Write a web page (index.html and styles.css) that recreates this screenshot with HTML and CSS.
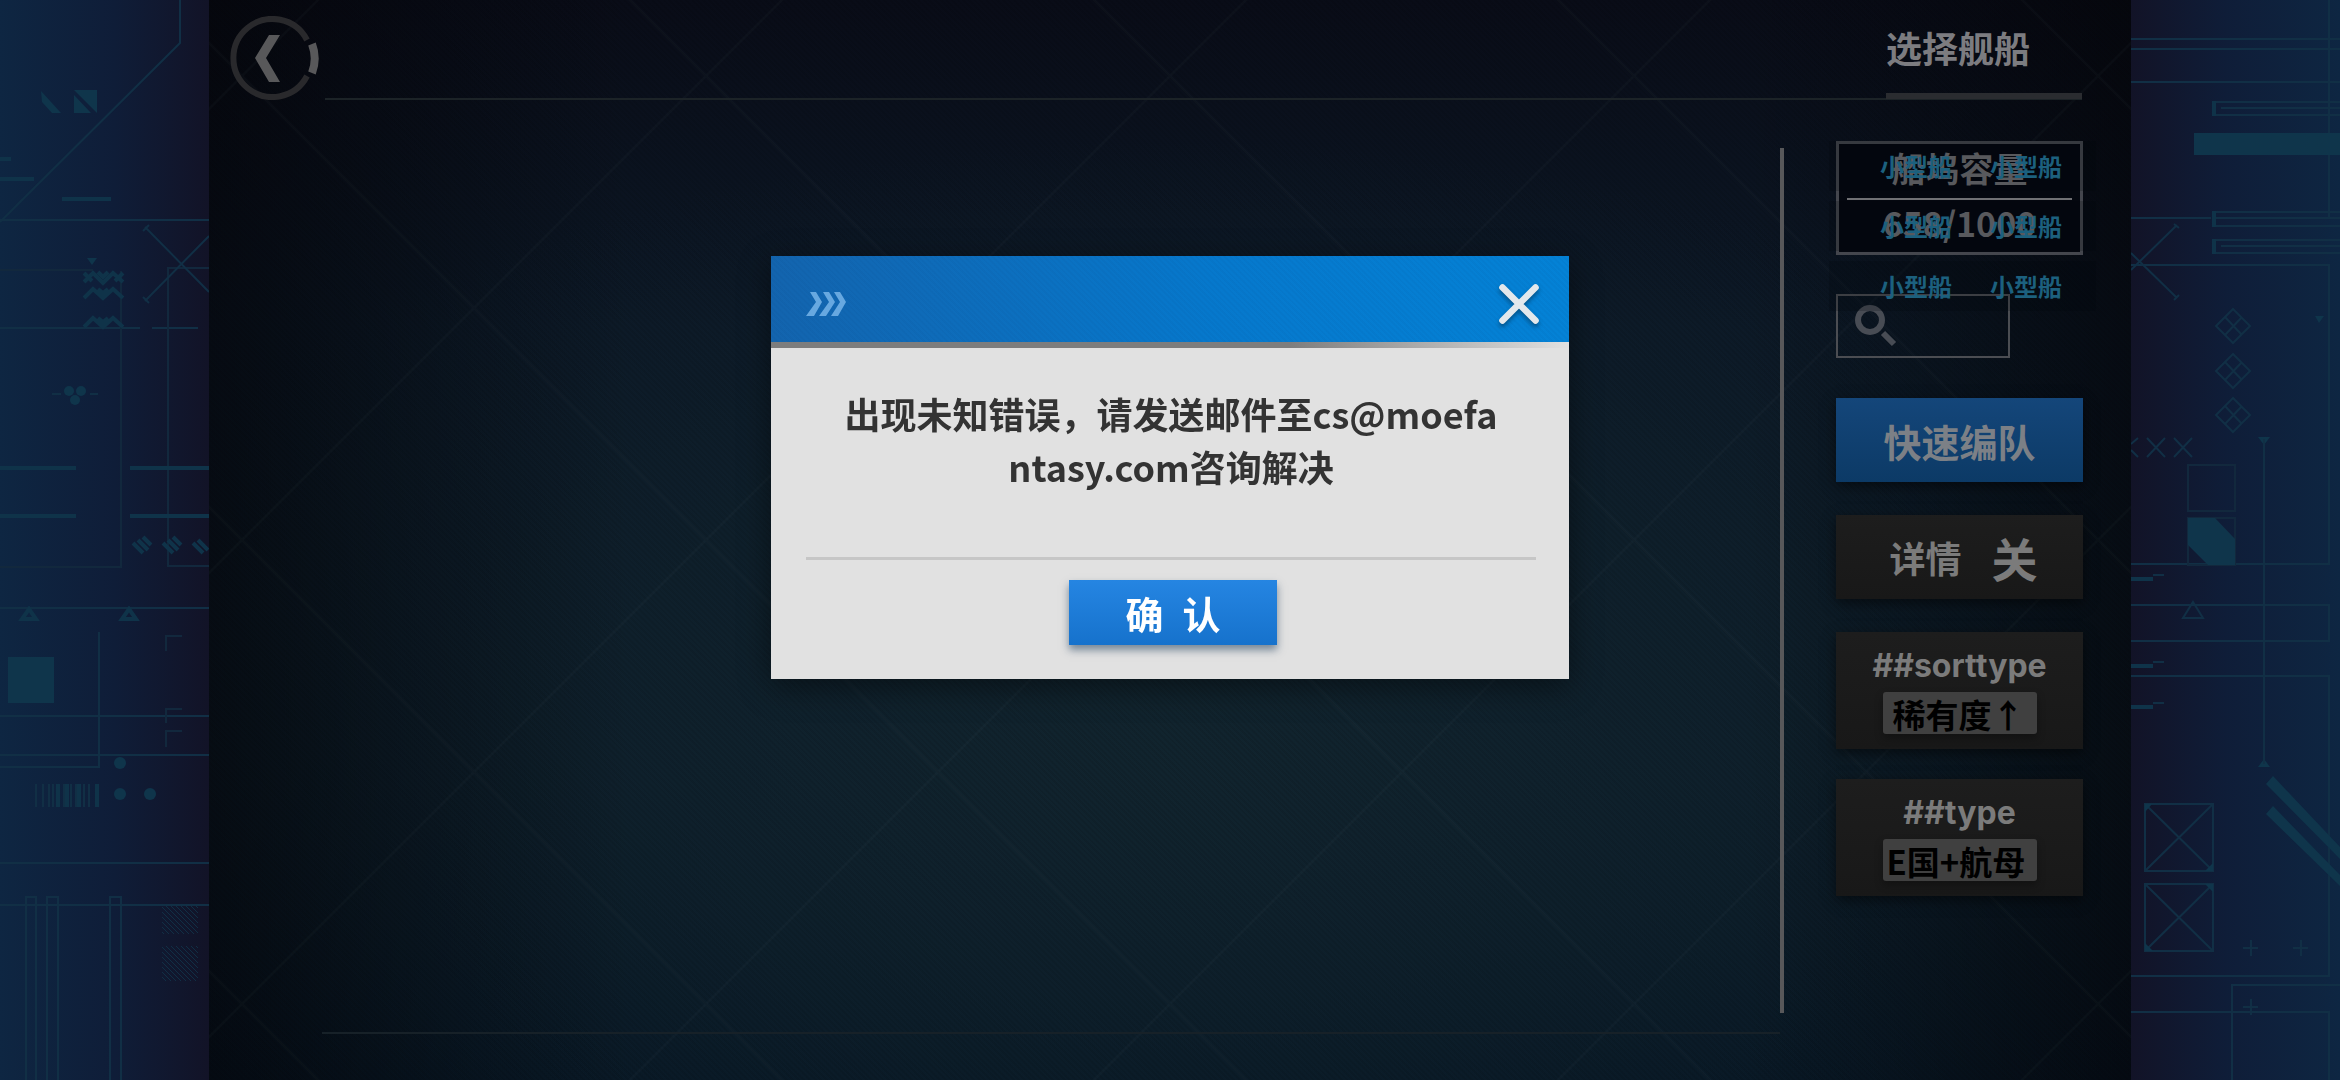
FILE: index.html
```html
<!DOCTYPE html>
<html lang="zh-CN">
<head>
    <meta charset="UTF-8">
    <meta name="viewport" content="width=device-width, initial-scale=1.0">
    <title>选择舰船</title>
    <link rel="stylesheet" href="styles.css">
</head>
<body>
    <div class="game">
        <aside class="rail rail-left">
            <svg class="rail-art" viewBox="0 0 209 1080" preserveAspectRatio="xMinYMin slice" aria-hidden="true">
                <defs>
                    <pattern id="hatch" width="5" height="5" patternUnits="userSpaceOnUse">
                        <path class="thin" d="M0 0L5 5M-1 4L1 6M4 -1L6 1"/>
                    </pattern>
                </defs>
                <path class="line" d="M180 0V43L0 222M0 220H209M0 328H140M152 328H198M0 608H209M0 716H209M0 755H209M0 863H209M0 905H209"/>
                <path class="line faint" d="M0 270H93M121 271V567H0M209 268H168V566H209"/>
                <path class="line" d="M99 632V767H0"/>
                <path class="solid" d="M41 91L61 113H52L42 102zM74 90H97V113zM74 95L91 113H74z"/>
                <path class="bar" d="M0 159H11M0 179H34M62 199H111M0 468H76M130 468H209M0 516H76M130 516H209"/>
                <path class="line" d="M145 227L209 292M145 301L209 236M143 231L149 225M143 297L149 303"/>
                <path class="solid" d="M87 258H97L92 265z"/>
                <path class="bar" d="M84 282L93 273L103 283L113 273L123 282M84 273L92 281M123 273L115 281M98 272L103 277L108 272M84 298L93 289L103 298L113 289L123 298M84 327L93 318L103 327L113 318L123 327M98 289L103 293L108 289M98 318L103 322L108 318"/>
                <g class="solid">
                    <circle cx="69" cy="391" r="5"/>
                    <circle cx="81" cy="391" r="5"/>
                    <circle cx="75" cy="400" r="5"/>
                    <circle cx="120" cy="763" r="6"/>
                    <circle cx="120" cy="794" r="6"/>
                    <circle cx="150" cy="794" r="6"/>
                </g>
                <path class="line" d="M52 394H61M90 394H98"/>
                <path class="bar" d="M133 543L143 553M138 540L148 550M143 537L151 545M163 543L173 553M168 540L178 550M173 537L181 545M193 543L203 553M198 540L208 550"/>
                <path class="bar" d="M29 609L36 619H22zM129 609L136 619H122z"/>
                <rect class="solid" x="8" y="657" width="46" height="46"/>
                <path class="line faint" d="M182 636H166V651M182 709H166V723M182 731H166V747"/>
                <path class="line" d="M36 784V807M43 784V807M49 784V807M53 784V807M64 784V807M71 784V807M76 784V807M84 784V807M89 784V807"/>
                <path class="bar" d="M58 784V807M67 784V807M79 784V807M97 784V807"/>
                <path class="line" d="M26 1080V897H36V1080M47 1080V897H58V1080M110 1080V897H121V1080"/>
                <rect fill="url(#hatch)" x="162" y="904" width="36" height="30"/>
                <rect fill="url(#hatch)" x="162" y="946" width="36" height="35"/>
            </svg>
        </aside>

        <main class="stage">
            <svg class="lattice" aria-hidden="true">
                <defs>
                    <pattern id="lattice" x="33" y="76" width="464" height="464" patternUnits="userSpaceOnUse">
                        <path d="M0 0L464 464M464 0L0 464"/>
                    </pattern>
                </defs>
                <rect width="100%" height="100%" fill="url(#lattice)"/>
            </svg>

            <header class="top">
                <button class="back" type="button" aria-label="返回">
                    <svg viewBox="0 0 92 84" aria-hidden="true">
                        <path class="ring" d="M78 24A39 39 0 1 0 78 60"/>
                        <path class="ring-cap" d="M83 28A41 41 0 0 1 83 57"/>
                        <path class="chevron" d="M40 19H51L37 42L51 66H40L26 42z"/>
                    </svg>
                </button>
                <div class="top-line">
                    <h1 class="title">选择舰船</h1>
                </div>
            </header>

            <div class="content">
                <section class="ships"></section>

                <nav class="side">
                    <div class="dock">
                        <div class="dock-label">船坞容量</div>
                        <div class="dock-count">658/1000</div>
                        <div class="ship-tags">
                            <div class="tag-row"><span>小型船</span><span>小型船</span></div>
                            <div class="tag-row"><span>小型船</span><span>小型船</span></div>
                            <div class="tag-row"><span>小型船</span><span>小型船</span></div>
                        </div>
                    </div>

                    <label class="search">
                        <svg viewBox="0 0 42 42" aria-hidden="true">
                            <circle cx="15" cy="15" r="12"/>
                            <path d="M28 28L39 39"/>
                        </svg>
                        <input type="text" aria-label="搜索">
                    </label>

                    <button class="btn quick" type="button">快速编队</button>
                    <button class="btn detail" type="button">详情<strong>关</strong></button>
                    <button class="btn sort" type="button">
                        <span class="key">##sorttype</span>
                        <span class="chip">稀有度↑</span>
                    </button>
                    <button class="btn sort" type="button">
                        <span class="key">##type</span>
                        <span class="chip chip-wide">E国+航母</span>
                    </button>
                </nav>
            </div>
        </main>

        <aside class="rail rail-right">
            <svg class="rail-art" viewBox="0 0 209 1080" preserveAspectRatio="xMinYMin slice" aria-hidden="true">
                <path class="line" d="M0 39H209M0 49H209M0 82H209M198 0V218M0 218H80M0 265H198V564H0M0 605H198V641H0M0 676H198V976H0M0 1012H198V1080M101 1080V985H209"/>
                <path class="line" d="M209 102H82V115H209M90 108H209M209 212H82V226H209M84 218H209M209 240H82V253H209M90 246H209"/>
                <path class="bar" d="M83 101V116M83 211V227M83 239V254"/>
                <rect class="solid" x="63" y="133" width="146" height="22"/>
                <path class="line" d="M0 270L46 225M0 253L46 298M43 224L48 228M43 300L48 295"/>
                <path class="line" d="M102 309L119 326L102 343L85 326zM94 317L111 335M111 317L94 335M102 354L119 371L102 388L85 371zM94 362L111 380M111 362L94 380M102 398L119 415L102 432L85 415zM94 406L111 424M111 406L94 424"/>
                <path class="solid" d="M184 316H193L188 323zM127 437H139L133 445zM127 767H139L133 759z"/>
                <path class="line" d="M0 444L7 438M0 450L7 457M16 438L34 457M34 438L16 457M43 438L61 457M61 438L43 457"/>
                <path class="line" d="M133 439V764"/>
                <path class="line faint" d="M57 465H104V511H57zM57 518H104V565H57z"/>
                <path class="solid" d="M57 518H84L104 539V565H77L57 545z"/>
                <path class="bar" d="M0 579H22M0 666H22M0 707H22"/>
                <path class="line" d="M22 575H33M22 662H33M22 703H33M62 602L72 618H52z"/>
                <path class="line" d="M14 804H82V871H14zM14 804L82 871M82 804L14 871M14 884H82V951H14zM14 884L82 951M82 884L14 951"/>
                <path class="solid" d="M14 804H21L14 812zM82 871V863L74 871zM82 884V892L74 884zM14 951V943L22 951z"/>
                <path class="solid" d="M142 776L209 847V859L135 784zM142 806L209 875V886L135 814z"/>
                <path class="line" d="M112 948H127M120 940V956M162 948H177M170 940V956M112 1007H127M120 999V1015"/>
            </svg>
        </aside>
    </div>

    <div class="overlay">
        <div class="dialog" role="alertdialog" aria-modal="true" aria-describedby="message">
            <div class="dialog-head">
                <svg class="arrows" viewBox="0 0 40 24" aria-hidden="true">
                    <path d="M4 0H10L16 10L8 24H0L10 10zM17 0H23L29 10L20 24H13L23 10zM28 0H34L40 10L32 24H25L34 10z"/>
                </svg>
                <button class="close" type="button" aria-label="关闭">
                    <svg viewBox="0 0 40 40" aria-hidden="true">
                        <path d="M5 5L35 35M35 5L5 35"/>
                    </svg>
                </button>
            </div>
            <div class="dialog-body">
                <p class="message" id="message">出现未知错误，请发送邮件至cs@moefantasy.com咨询解决</p>
                <div class="actions">
                    <button class="confirm" type="button">确&ensp;认</button>
                </div>
            </div>
        </div>
    </div>
</body>
</html>
```
FILE: styles.css
```css
* {
    box-sizing: border-box;
}
body {
    margin: 0;
    background: #05080e;
    font-family: "Noto Sans CJK SC", "Noto Sans", sans-serif;
    font-weight: bold;
    color: #7c7c80;
}
button {
    margin: 0;
    padding: 0;
    border: 0;
    background: none;
    color: inherit;
    font: inherit;
    cursor: pointer;
}
svg {
    display: block;
}
.game {
    display: grid;
    grid-template-columns: 209px 1fr 209px;
    min-height: 100vh;
}

/* side art */
.rail {
    overflow: hidden;
    background: linear-gradient(to right, #0e2642, #0f1d38 55%, #121327);
}
.rail-right {
    background: linear-gradient(to left, #0e2642, #0f1d38 55%, #121327);
}
.rail-art {
    width: 100%;
    height: 100%;
}
.line, .bar, .thin {
    fill: none;
    stroke: #112f45;
    stroke-width: 2;
}
.bar {
    stroke: #0f3349;
    stroke-width: 4;
}
.thin {
    stroke-width: 1;
}
.faint {
    stroke: #12283d;
}
.solid {
    fill: #0f354b;
}

/* main screen */
.stage {
    position: relative;
    display: flex;
    flex-direction: column;
    background:
        repeating-linear-gradient(45deg, rgba(0, 0, 0, 0.08) 0 2px, transparent 2px 4px),
        linear-gradient(to right, rgba(3, 4, 8, 0.65), transparent 22%, transparent 80%, rgba(3, 4, 8, 0.65)),
        radial-gradient(ellipse 60% 55% at 50% 68%, #11242e, rgba(17, 36, 46, 0)),
        linear-gradient(#090c17, #0c1826 30%, #0c1c29 70%, #071624);
}
.lattice {
    position: absolute;
    width: 100%;
    height: 100%;
}
.lattice path {
    fill: none;
    stroke: rgba(130, 160, 170, 0.03);
    stroke-width: 2;
}
.top {
    position: relative;
    display: flex;
    align-items: flex-start;
    gap: 4px;
    padding: 16px 49px 0 20px;
}
.back {
    width: 92px;
    height: 84px;
}
.ring {
    fill: none;
    stroke: #29292c;
    stroke-width: 6;
}
.ring-cap {
    fill: none;
    stroke: #58585a;
    stroke-width: 8;
}
.chevron {
    fill: #58585a;
}
.top-line {
    flex: 1;
    display: flex;
    justify-content: flex-end;
    border-bottom: 2px solid #1c2327;
}
.title {
    width: 196px;
    height: 83px;
    margin: 0 0 -1px;
    border-bottom: 6px solid #2a2c30;
    font-size: 36px;
    line-height: 62px;
}
.content {
    position: relative;
    flex: 1;
    display: flex;
    gap: 52px;
    padding: 41px 48px 46px 113px;
}
.ships {
    flex: 1;
    margin-top: 7px;
    border-right: 4px solid #58585a;
    background: linear-gradient(#172128, #172128) bottom / 100% 2px no-repeat;
    border-image: linear-gradient(#58585a calc(100% - 22px), transparent 0) 1;
}
.side {
    width: 247px;
    display: flex;
    flex-direction: column;
}
.dock {
    position: relative;
    height: 114px;
    margin-bottom: 39px;
    border: 3px solid #44464d;
    padding: 0 8px;
    background: #04070f;
    text-align: center;
    font-size: 34px;
    color: #6e6e72;
}
.dock-label {
    height: 56px;
    border-bottom: 2px solid #707074;
    line-height: 48px;
}
.dock-count {
    line-height: 46px;
}
.ship-tags {
    position: absolute;
    top: -3px;
    left: -10px;
    right: -16px;
    display: grid;
    gap: 10px;
}
.tag-row {
    display: flex;
    gap: 38px;
    padding-left: 51px;
    background: rgba(2, 4, 9, 0.2);
    font-size: 24px;
    line-height: 50px;
    color: #1c607e;
}
.search {
    display: flex;
    align-items: center;
    width: 174px;
    height: 64px;
    margin-bottom: 40px;
    padding-left: 17px;
    border: 2px solid #4b4d52;
}
.search svg {
    flex: none;
    width: 42px;
    height: 42px;
    fill: none;
    stroke: #484c54;
    stroke-width: 6;
}
.search input {
    width: 100%;
    min-width: 0;
    height: 100%;
    border: 0;
    background: none;
    color: inherit;
    font: inherit;
    font-size: 24px;
}
.btn {
    display: flex;
    align-items: center;
    justify-content: center;
    height: 84px;
    margin-bottom: 33px;
    background: linear-gradient(#1d1d1d, #181818);
    box-shadow: 0 4px 12px rgba(0, 0, 0, 0.5);
    font-size: 36px;
    color: #7b7b7b;
}
.quick {
    background: linear-gradient(#14467a, #0c3a66);
    font-size: 38px;
    color: #7c8086;
}
.detail {
    gap: 30px;
    padding-left: 8px;
}
.detail strong {
    font-size: 46px;
    font-weight: bold;
    line-height: 60px;
}
.sort {
    flex-direction: column;
    gap: 8px;
    height: 117px;
    margin-bottom: 30px;
}
.key {
    font-family: Inter, "Liberation Sans", sans-serif;
    font-size: 32px;
    line-height: 36px;
}
.chip {
    width: 154px;
    height: 42px;
    padding-left: 10px;
    border-radius: 3px;
    background: #404040;
    box-shadow: 0 4px 8px rgba(0, 0, 0, 0.3);
    font-size: 33px;
    line-height: 44px;
    text-align: left;
    white-space: nowrap;
    color: #000;
}
.chip-wide {
    padding-left: 4px;
}

/* error dialog */
.overlay {
    position: fixed;
    inset: 0;
    display: flex;
    align-items: flex-start;
    justify-content: center;
    padding-top: 256px;
}
.dialog {
    width: 798px;
    background: #e1e1e1;
    box-shadow: 0 8px 30px rgba(0, 0, 0, 0.45);
    color: #333;
}
.dialog-head {
    display: flex;
    align-items: center;
    justify-content: space-between;
    height: 86px;
    padding: 9px 28px 0 35px;
    background:
        repeating-linear-gradient(45deg, rgba(0, 40, 90, 0.04) 0 2px, transparent 2px 4px),
        linear-gradient(to right, #1364ae, #0678cc 55%, #0482d6);
}
.arrows {
    width: 40px;
    height: 24px;
    fill: #67a8e0;
}
.close svg {
    width: 44px;
    height: 44px;
    fill: none;
    stroke: #e3e8ec;
    stroke-width: 6;
    stroke-linecap: round;
    filter: drop-shadow(0 3px 2px rgba(0, 0, 0, 0.35));
}
.dialog-body {
    padding: 0 33px 34px 35px;
    background: linear-gradient(to right, #7d7d7d 65%, #e1e1e1) top / 100% 6px no-repeat;
}
.message {
    max-width: 666px;
    min-height: 215px;
    margin: 0 auto;
    padding-top: 45px;
    font-size: 36px;
    line-height: 53px;
    text-align: center;
    word-break: break-all;
}
.actions {
    display: flex;
    justify-content: center;
    padding: 20px 0 0 4px;
    border-top: 3px solid #c6c6c6;
}
.confirm {
    width: 208px;
    height: 65px;
    background: linear-gradient(#2585e2, #1672cc);
    box-shadow: 0 5px 8px rgba(30, 60, 90, 0.55);
    font-size: 38px;
    color: #fff;
}
```
